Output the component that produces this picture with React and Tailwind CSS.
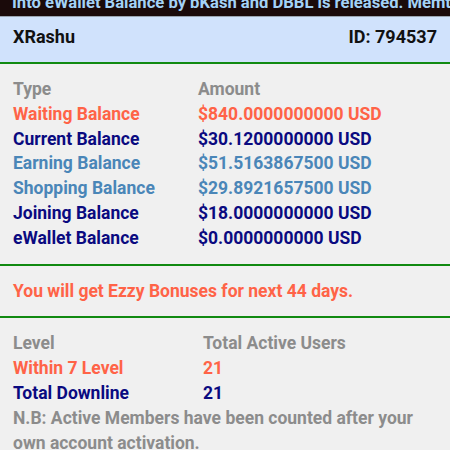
export default function App() {
  const font = { fontFamily: "Roboto, 'Noto Sans', sans-serif" };
  const rows = [
    ["Waiting Balance", "$840.0000000000 USD", "text-[#ff6347]"],
    ["Current Balance", "$30.1200000000 USD", "text-[#0a0a80]"],
    ["Earning Balance", "$51.5163867500 USD", "text-[#4a86b8]"],
    ["Shopping Balance", "$29.8921657500 USD", "text-[#4a86b8]"],
    ["Joining Balance", "$18.0000000000 USD", "text-[#0a0a80]"],
    ["eWallet Balance", "$0.0000000000 USD", "text-[#0a0a80]"],
  ];
  return (
    <div className="w-[450px] h-[450px] overflow-hidden bg-[#f0f0f0] font-bold" style={font}>
      <div className="h-[17px] bg-[#1a0a0a] overflow-hidden whitespace-nowrap border-b border-[#9aa4b0]">
        <div className="pl-[12px] text-[16.6px] font-bold leading-[20px] mt-[-7px] text-[#a3d2f7]">
          Into eWallet Balance by bKash and DBBL is released. Memt
        </div>
      </div>
      <div className="h-[47px] bg-[#d0e2fc] border-b-2 border-[#118a11] flex items-center justify-between px-[13px] pb-[7px] text-[18px] font-bold text-[#111]">
        <span>XRashu</span>
        <span>ID: 794537</span>
      </div>
      <div className="px-[13px] pt-[13px] pb-[13.6px] text-[17.5px] leading-[24.8px]">
        <div className="flex text-[#8c8c8c]">
          <div className="w-[185px]">Type</div>
          <div>Amount</div>
        </div>
        {rows.map(([a, b, c]) => (
          <div key={a} className={"flex " + c}>
            <div className="w-[185px]">{a}</div>
            <div>{b}</div>
          </div>
        ))}
      </div>
      <div className="border-t-2 border-b-2 border-[#118a11] h-[54px] flex items-center px-[13px] text-[17.5px] text-[#ff6347] font-bold">
        You will get Ezzy Bonuses for next 44 days.
      </div>
      <div className="px-[13px] pt-[12.5px] text-[17.5px] leading-[25px]">
        <div className="flex text-[#8c8c8c]">
          <div className="w-[190px]">Level</div>
          <div>Total Active Users</div>
        </div>
        <div className="flex text-[#ff6347]">
          <div className="w-[190px]">Within 7 Level</div>
          <div>21</div>
        </div>
        <div className="flex text-[#0a0a80]">
          <div className="w-[190px]">Total Downline</div>
          <div>21</div>
        </div>
        <div className="text-[#8c8c8c] pr-[20px]">
          N.B: Active Members have been counted after your own account activation.
        </div>
      </div>
    </div>
  );
}
